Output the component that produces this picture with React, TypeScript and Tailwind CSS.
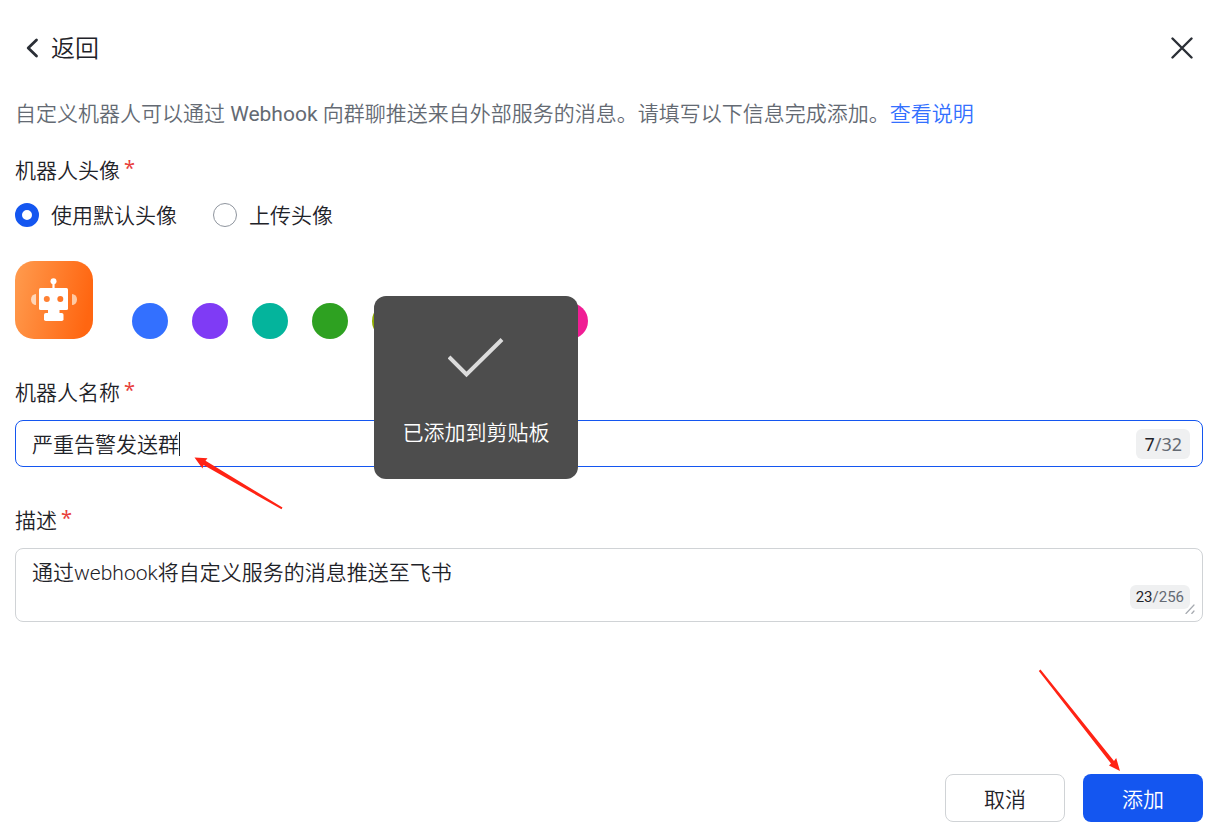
import React, { useState } from 'react';

const NAME_LIMIT = 32;
const DESC_LIMIT = 256;

const avatarColors = [
  { key: 'blue', label: '蓝色', className: 'bg-[#3370ff]' },
  { key: 'purple', label: '紫色', className: 'bg-[#7f3bf5]' },
  { key: 'teal', label: '青色', className: 'bg-[#04b49c]' },
  { key: 'green', label: '绿色', className: 'bg-[#2ea121]' },
  { key: 'lime', label: '黄绿色', className: 'bg-[#8fac02]' },
  { key: 'orange', label: '橙色', className: 'bg-[#ff811a]' },
  { key: 'red', label: '红色', className: 'bg-[#f54a45]' },
  { key: 'pink', label: '粉色', className: 'bg-[#f01d94]' },
];

const RobotAvatar: React.FC = () => (
  <svg className="w-[78px] h-[78px] shrink-0" viewBox="0 0 78 78" role="img" aria-label="机器人头像">
    <defs>
      <linearGradient id="avatarBg" x1="0" y1="0.15" x2="1" y2="0.35">
        <stop offset="0" stopColor="#ff9a4d" />
        <stop offset="1" stopColor="#ff6611" />
      </linearGradient>
    </defs>
    <rect width="78" height="78" rx="19" fill="url(#avatarBg)" />
    <path d="M21 33a5 5.500 0 0 0 0 11z" fill="#ffd6b8" />
    <path d="M57 33a5 5.500 0 0 1 0 11z" fill="#ffc9a3" />
    <circle cx="38.5" cy="20.3" r="3" fill="#fff" />
    <rect x="37.4" y="21" width="2.2" height="7" fill="#fff" />
    <rect x="24" y="27" width="29" height="22" rx="1.5" fill="#fff" />
    <rect x="33" y="48" width="11.5" height="6" fill="#fff" />
    <rect x="29" y="52" width="19.5" height="8" rx="1.8" fill="#fff" />
    <circle cx="31.8" cy="38" r="3" fill="#ff8133" />
    <circle cx="45.3" cy="38" r="3" fill="#ff7626" />
  </svg>
);

const FieldLabel: React.FC<{ htmlFor?: string; id?: string; children: React.ReactNode }> = ({ htmlFor, id, children }) => (
  <label htmlFor={htmlFor} id={id} className="flex items-center h-[34px] text-[#1f2329]">
    {children}
    <span className="ml-1 mb-1.5 text-xl font-normal text-[#e8403c] font-['Noto_Sans',sans-serif]">*</span>
  </label>
);

const radioClass =
  'appearance-none w-6 h-6 rounded-full border border-[#8f959e] bg-white checked:border-[7px] checked:border-[#1456f0]';

const App: React.FC = () => {
  const [avatarType, setAvatarType] = useState<'default' | 'upload'>('default');
  const [name, setName] = useState('严重告警发送群');
  const [desc, setDesc] = useState('通过webhook将自定义服务的消息推送至飞书');

  return (
    <div className="relative min-h-screen flex flex-col bg-white pl-[15px] pr-[11px] pt-7 pb-3 text-[21px] leading-8 font-[350] text-[#1f2329] font-[Roboto,'Noto_Sans_CJK_SC',sans-serif]">
      <header className="flex items-center justify-between h-10">
        <button type="button" className="flex items-center gap-3 pl-2.5 text-2xl">
          <svg className="w-3.5 h-5" viewBox="0 0 14 20" fill="none" stroke="#2b2f36" strokeWidth="2.8" strokeLinecap="round" strokeLinejoin="round" aria-hidden="true">
            <path d="M11.500 2 3.200 10l8.300 8" />
          </svg>
          <span className="pt-0.5">返回</span>
        </button>
        <button type="button" aria-label="关闭" className="pr-2.5">
          <svg className="w-[22px] h-[22px]" viewBox="0 0 22 22" fill="none" stroke="#2b2f36" strokeWidth="2.4" strokeLinecap="round" aria-hidden="true">
            <path d="M1.500 1.500l19 19M20.500 1.500l-19 19" />
          </svg>
        </button>
      </header>

      <p className="mt-[30px] text-[#646a73]">
        自定义机器人可以通过 <span className="font-normal">Webhook</span> 向群聊推送来自外部服务的消息。请填写以下信息完成添加。
        <a href="#help" className="text-[#3370ff]">查看说明</a>
      </p>

      <div className="mt-6" role="radiogroup" aria-labelledby="avatarLabel">
        <FieldLabel id="avatarLabel">机器人头像</FieldLabel>
        <div className="mt-2.5 flex items-center gap-9">
          <label className="flex items-center gap-3">
            <input type="radio" name="avatar" className={radioClass} checked={avatarType === 'default'} onChange={() => setAvatarType('default')} />
            <span className="pt-0.5">使用默认头像</span>
          </label>
          <label className="flex items-center gap-3">
            <input type="radio" name="avatar" className={radioClass} checked={avatarType === 'upload'} onChange={() => setAvatarType('upload')} />
            <span className="pt-0.5">上传头像</span>
          </label>
        </div>
      </div>

      <div className="mt-[29px] flex items-end">
        <RobotAvatar />
        <div className="ml-[39px] flex gap-6">
          {avatarColors.map((color) => (
            <button key={color.key} type="button" aria-label={color.label} className={`w-9 h-9 rounded-full ${color.className}`} />
          ))}
        </div>
      </div>

      <div className="mt-[37px]">
        <FieldLabel htmlFor="robotName">机器人名称</FieldLabel>
        <div className="mt-2.5 flex items-center h-[47px] pl-4 pr-3 border border-[#1456f0] rounded-lg">
          <input
            id="robotName"
            type="text"
            maxLength={NAME_LIMIT}
            value={name}
            onChange={(e) => setName(e.target.value)}
            className="field-sizing-content pt-0.5 outline-none caret-transparent"
          />
          <span className="w-px h-6 bg-[#1f2329]" />
          <span className="ml-auto h-[30px] px-2 rounded-md bg-[#eff0f1] text-lg leading-[30px] font-normal text-[#646a73] font-['Noto_Sans',sans-serif]">
            <span className="text-[#1f2329]">{name.length}</span>/{NAME_LIMIT}
          </span>
        </div>
      </div>

      <div className="mt-[37px]">
        <FieldLabel htmlFor="robotDesc">描述</FieldLabel>
        <div className="relative mt-2.5">
          <textarea
            id="robotDesc"
            maxLength={DESC_LIMIT}
            value={desc}
            onChange={(e) => setDesc(e.target.value)}
            className="block w-full h-[74px] px-4 py-2 border border-[#d0d3d6] rounded-lg outline-none resize-none"
          />
          <span className="absolute right-[13px] bottom-[13px] h-6 px-1.5 rounded-md bg-[#eff0f1] text-[15px] leading-6 font-normal text-[#646a73]">
            <span className="text-[#1f2329]">{desc.length}</span>/{DESC_LIMIT}
          </span>
          <svg className="absolute right-2 bottom-2 w-2.5 h-2.5" viewBox="0 0 10 10" stroke="#a6aab0" strokeWidth="1.2" strokeLinecap="round" aria-hidden="true">
            <path d="M1 9.500 9 1M6.800 9.500 9 7" />
          </svg>
        </div>
      </div>

      <footer className="mt-auto flex justify-end gap-[18px]">
        <button type="button" className="w-[120px] h-12 pt-1 border border-[#d0d3d6] rounded-lg bg-white">取消</button>
        <button type="button" className="w-[120px] h-12 pt-1 rounded-lg bg-[#1456f0] text-white">添加</button>
      </footer>

      {/* Copied-to-clipboard toast */}
      <div role="status" className="absolute left-[374px] top-[296px] w-[204px] h-[183px] pt-10 flex flex-col items-center rounded-xl bg-[#4d4d4d] text-white">
        <svg className="w-14 h-11" viewBox="0 0 56 44" fill="none" stroke="#dcdcdc" strokeWidth="4" aria-hidden="true">
          <path d="M1 21 18.500 38.500 54 3.500" />
        </svg>
        <span className="mt-[37px]">已添加到剪贴板</span>
      </div>

      {/* Annotation arrows */}
      <svg className="absolute left-[194px] top-[456px] w-[90px] h-[54px] pointer-events-none" viewBox="0 0 90 54" fill="#ff2314" aria-hidden="true">
        <path d="M0.500 1.500 13.500 2.200 11.500 4.700 88.500 51.500 87.500 53.300 9.500 9 8.500 12.400z" />
      </svg>
      <svg className="absolute left-[1038px] top-[668px] w-[84px] h-[104px] pointer-events-none" viewBox="0 0 84 104" fill="#ff2314" aria-hidden="true">
        <path d="M0.800 2.900 2.500 1.600 76 93 78.200 90 82 103 71 97.600 73 95.500z" />
      </svg>
    </div>
  );
};

export default App;
